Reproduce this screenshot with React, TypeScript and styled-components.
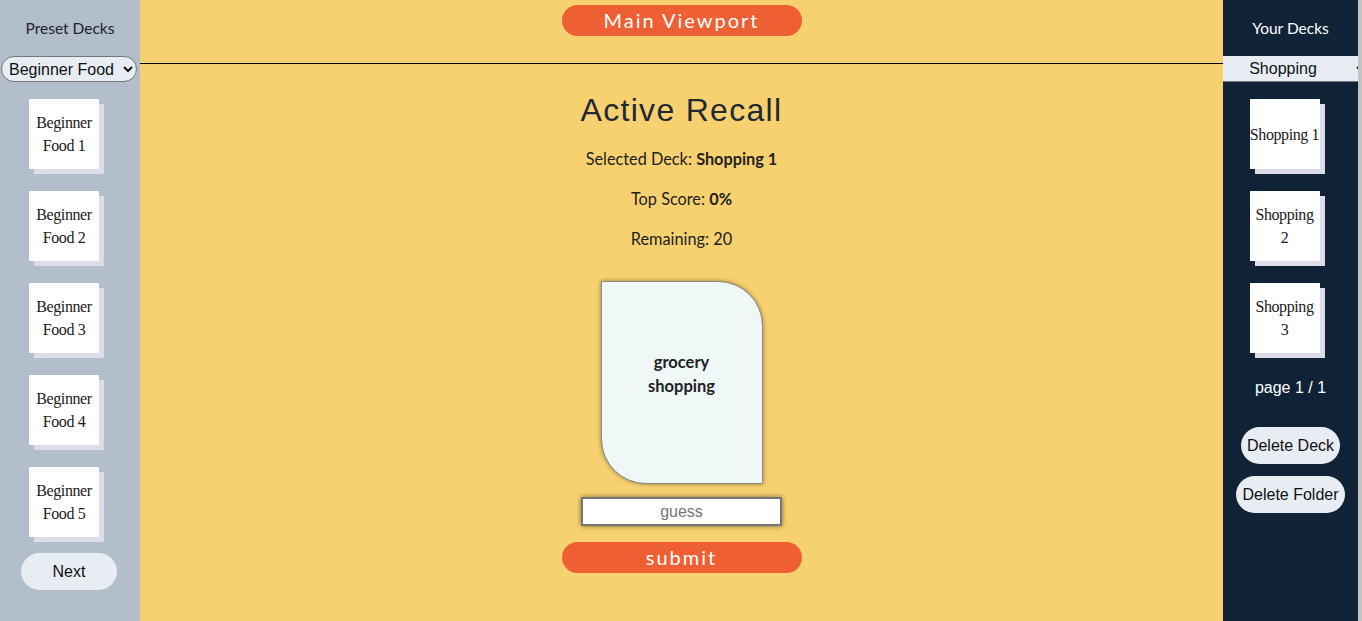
import React from "react";
import styled, { createGlobalStyle } from "styled-components";

const GlobalStyle = createGlobalStyle`
  html, body { margin: 0; padding: 0; }
  body { font-family: "Liberation Sans", Arial, sans-serif; overflow: hidden; }
  * { box-sizing: border-box; }
`;

const Layout = styled.div`
  display: grid;
  grid-template-columns: 140px 1fr 139px;
  height: 621px;
  width: 1362px;
`;

const Sidebar = styled.aside<{ $dark?: boolean }>`
  background: ${(p) => (p.$dark ? "#102236" : "#b2beca")};
  color: ${(p) => (p.$dark ? "#ffffff" : "#1c2230")};
  display: flex;
  flex-direction: column;
  align-items: center;
  overflow: hidden;
  border-right: ${(p) => (p.$dark ? "4px solid #c3c3c3" : "none")};
`;

const SideTitle = styled.div`
  font-family: Lato, "Noto Sans", sans-serif;
  font-size: 15.5px;
  line-height: 18px;
  margin-top: 19px;
`;

const DeckSelect = styled.select<{ $square?: boolean }>`
  margin-top: 19px;
  height: 26px;
  font-family: "Liberation Sans", Arial, sans-serif;
  font-size: 16px;
  color: #111;
  background: #e8edf4;
  border: 1px solid #777;
  border-radius: ${(p) => (p.$square ? "0" : "13px")};
  width: ${(p) => (p.$square ? "146px" : "136px")};
  margin-right: ${(p) => (p.$square ? "0" : "2px")};
  align-self: ${(p) => (p.$square ? "flex-start" : "center")};
  text-align: ${(p) => (p.$square ? "center" : "left")};
  text-align-last: ${(p) => (p.$square ? "center" : "left")};
  padding: ${(p) => (p.$square ? "0 14px 0 0" : "0 2px 0 3px")};
  ${(p) => (p.$square ? "border-left: none; border-right: none; border-top: none;" : "")}
  outline: none;
`;

const DeckList = styled.div`
  margin-top: 17px;
  display: flex;
  flex-direction: column;
  gap: 22px;
  align-items: center;
`;

const DeckCard = styled.div`
  width: 70px;
  height: 70px;
  margin-right: 12px;
  background: #ffffff;
  box-shadow: 5px 5px 0 #dedce8;
  display: flex;
  flex-direction: column;
  align-items: center;
  justify-content: center;
  font-family: "Liberation Serif", "DejaVu Serif", serif;
  font-size: 16px;
  line-height: 23px;
  letter-spacing: -0.4px;
  color: #1a1a1a;
  text-align: center;
  white-space: nowrap;
`;

const PillButton = styled.button<{ $width?: number }>`
  height: 37px;
  border: none;
  border-radius: 19px;
  background: #e8edf4;
  color: #111;
  font-family: "Liberation Sans", Arial, sans-serif;
  font-size: 16px;
  padding: 0 6px;
  width: ${(p) => (p.$width ? `${p.$width}px` : "auto")};
  cursor: pointer;
`;

const NextButton = styled(PillButton)`
  margin-top: 16px;
  margin-right: 2px;
`;

const PageInfo = styled.div`
  margin-top: 26px;
  font-family: "Liberation Sans", Arial, sans-serif;
  font-size: 16px;
  line-height: 18px;
`;

const ButtonStack = styled.div`
  margin-top: 30px;
  display: flex;
  flex-direction: column;
  align-items: center;
  gap: 12px;
`;

const Main = styled.main`
  background: #f7d170;
  display: flex;
  flex-direction: column;
  align-items: center;
`;

const Header = styled.header`
  width: 100%;
  height: 64px;
  border-bottom: 1px solid #000;
  display: flex;
  justify-content: center;
  align-items: flex-start;
`;

const OrangeButton = styled.button<{ $top?: number }>`
  margin-top: ${(p) => p.$top ?? 0}px;
  width: 240px;
  height: 31px;
  border: none;
  border-radius: 16px;
  background: #ee6033;
  color: #fff;
  font-family: Lato, "Noto Sans", sans-serif;
  font-size: 20px;
  letter-spacing: 2px;
  line-height: 31px;
  padding: 0;
  cursor: pointer;
`;

const Title = styled.h1`
  margin: 28px 0 0;
  font-family: "Liberation Sans", Arial, sans-serif;
  font-weight: 400;
  font-size: 32px;
  line-height: 37px;
  letter-spacing: 1.3px;
  color: #1f2833;
`;

const Stat = styled.p<{ $top: number }>`
  margin: ${(p) => p.$top}px 0 0;
  font-family: Lato, "Noto Sans", sans-serif;
  font-size: 16.3px;
  line-height: 20px;
  color: #222;
  b { font-weight: 700; }
`;

const FlashCard = styled.div`
  margin-top: 32px;
  width: 162px;
  height: 203px;
  background: #eff7f7;
  border: 1px solid #8a8a80;
  border-radius: 0 45px 0 45px;
  box-shadow: 0 0 4px rgba(60, 50, 20, 0.55);
  display: flex;
  align-items: center;
  justify-content: center;
  padding: 0 34px 18px;
  text-align: center;
  font-family: Lato, "Noto Sans", sans-serif;
  font-weight: 700;
  font-size: 16.5px;
  line-height: 24px;
  color: #222;
`;

const GuessInput = styled.input`
  margin-top: 13px;
  width: 201px;
  height: 29px;
  border: 2px solid #777;
  background: #fff;
  box-shadow: 0 0 5px rgba(0, 0, 0, 0.5);
  text-align: center;
  font-family: "Liberation Sans", Arial, sans-serif;
  font-size: 16px;
  outline: none;
  &::placeholder { color: #757575; }
`;

const presetDecks = [
  ["Beginner", "Food 1"],
  ["Beginner", "Food 2"],
  ["Beginner", "Food 3"],
  ["Beginner", "Food 4"],
  ["Beginner", "Food 5"],
];

const userDecks = [["Shopping 1"], ["Shopping", "2"], ["Shopping", "3"]];

function Deck({ lines }: { lines: string[] }) {
  return (
    <DeckCard>
      {lines.map((l) => (
        <span key={l}>{l}</span>
      ))}
    </DeckCard>
  );
}

export default function App() {
  return (
    <>
      <GlobalStyle />
      <Layout>
        <Sidebar>
          <SideTitle>Preset Decks</SideTitle>
          <DeckSelect defaultValue="beginner-food">
            <option value="beginner-food">Beginner Food</option>
          </DeckSelect>
          <DeckList>
            {presetDecks.map((d) => (
              <Deck key={d.join(" ")} lines={d} />
            ))}
          </DeckList>
          <NextButton $width={96}>Next</NextButton>
        </Sidebar>

        <Main>
          <Header>
            <OrangeButton $top={5}>Main Viewport</OrangeButton>
          </Header>
          <Title>Active Recall</Title>
          <Stat $top={20}>
            Selected Deck: <b>Shopping 1</b>
          </Stat>
          <Stat $top={20}>
            Top Score: <b>0%</b>
          </Stat>
          <Stat $top={20}>Remaining: 20</Stat>
          <FlashCard>grocery shopping</FlashCard>
          <GuessInput placeholder="guess" />
          <OrangeButton $top={16}>submit</OrangeButton>
        </Main>

        <Sidebar $dark>
          <SideTitle>Your Decks</SideTitle>
          <DeckSelect $square defaultValue="shopping">
            <option value="shopping">Shopping</option>
          </DeckSelect>
          <DeckList>
            {userDecks.map((d) => (
              <Deck key={d.join(" ")} lines={d} />
            ))}
          </DeckList>
          <PageInfo>page 1 / 1</PageInfo>
          <ButtonStack>
            <PillButton>Delete Deck</PillButton>
            <PillButton>Delete Folder</PillButton>
          </ButtonStack>
        </Sidebar>
      </Layout>
    </>
  );
}
